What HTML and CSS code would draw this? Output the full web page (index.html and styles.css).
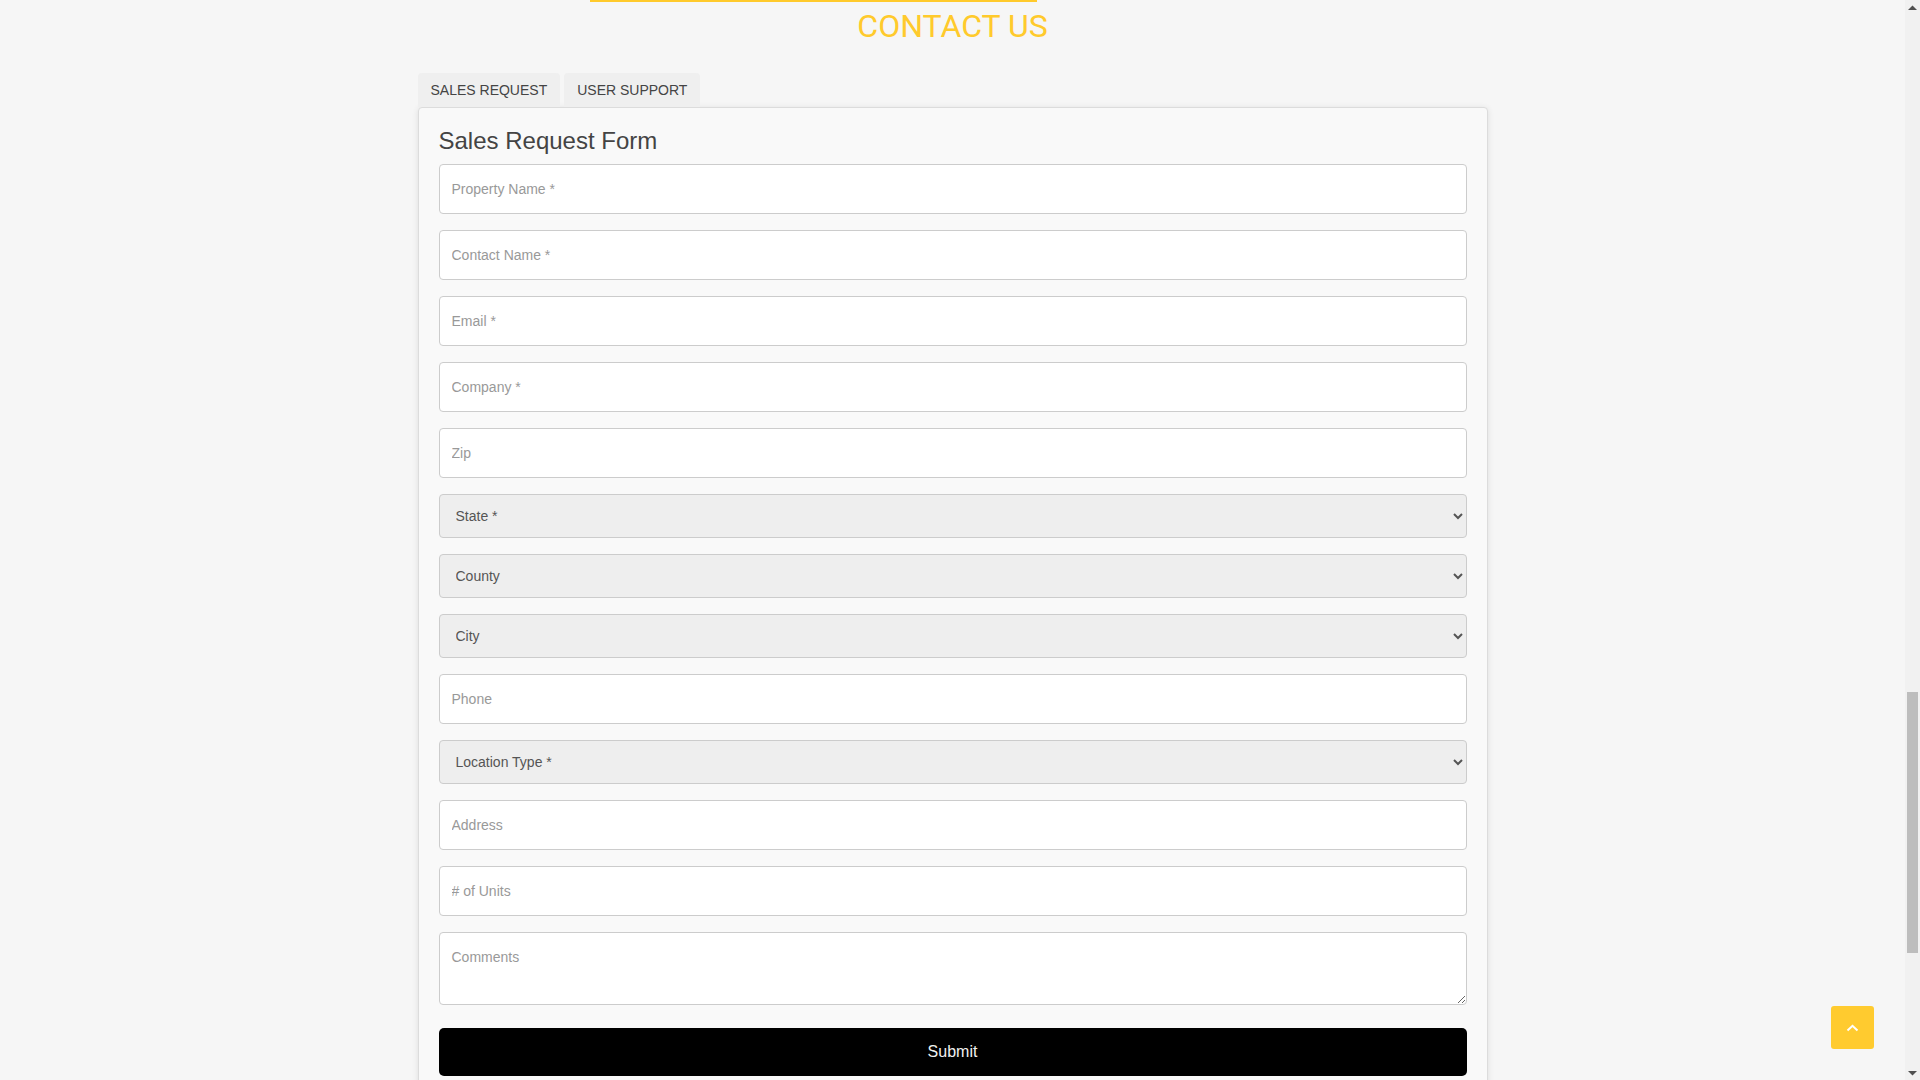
FILE: index.html
```html
<!DOCTYPE html>
<html lang="en">
<head>
<meta charset="utf-8">
<title>Contact Us</title>
<link rel="stylesheet" href="styles.css">
</head>
<body>
<div class="frame">
  <div class="page">
    <div class="topbar"></div>
    <h1 class="title">CONTACT US</h1>
    <div class="wrap">
      <div class="tabs">
        <div class="tab active">SALES REQUEST</div>
        <div class="tab">USER SUPPORT</div>
      </div>
      <div class="card">
        <h3 class="form-title">Sales Request Form</h3>
        <form class="form">
          <input class="field" type="text" placeholder="Property Name *">
          <input class="field" type="text" placeholder="Contact Name *">
          <input class="field" type="text" placeholder="Email *">
          <input class="field" type="text" placeholder="Company *">
          <input class="field" type="text" placeholder="Zip">
          <select class="choice"><option>State *</option></select>
          <select class="choice"><option>County</option></select>
          <select class="choice"><option>City</option></select>
          <input class="field" type="text" placeholder="Phone">
          <select class="choice"><option>Location Type *</option></select>
          <input class="field" type="text" placeholder="Address">
          <input class="field" type="text" placeholder="# of Units">
          <textarea class="comments" placeholder="Comments"></textarea>
          <button class="submit" type="button">Submit</button>
        </form>
      </div>
    </div>
  </div>
  <div class="scrollbar">
    <div class="sb-arrow"><svg width="9" height="6" viewBox="0 0 9 6"><path d="M0 5 L4.5 0.5 L9 5 Z" fill="#505050"/></svg></div>
    <div class="sb-track">
      <div class="sb-space"></div>
      <div class="sb-thumb"></div>
      <div class="sb-rest"></div>
    </div>
    <div class="sb-arrow"><svg width="9" height="6" viewBox="0 0 9 6"><path d="M0 1 L4.5 5.5 L9 1 Z" fill="#505050"/></svg></div>
  </div>
</div>
<a class="to-top" href="#">
  <svg width="13" height="8" viewBox="0 0 13 8"><path d="M1.5 6.5 L6.5 1.8 L11.5 6.5" fill="none" stroke="#ffffff" stroke-width="2"/></svg>
</a>
</body>
</html>
```
FILE: styles.css
```css
html, body {
  margin: 0;
  padding: 0;
  height: 1080px;
  overflow: hidden;
}
body {
  background: #f6f6f6;
  font-family: "Liberation Sans", Arial, sans-serif;
  color: #333;
}
.frame {
  display: flex;
  height: 1080px;
}
.page {
  flex: 1;
  min-width: 0;
  overflow: hidden;
}
.topbar {
  height: 2px;
  width: 447px;
  margin-left: 590px;
  background: #ffca2c;
}
.title {
  margin: 6px 0 29px;
  text-align: center;
  font-family: Roboto, "Liberation Sans", sans-serif;
  font-weight: 400;
  font-size: 32px;
  line-height: 36px;
  letter-spacing: 0;
  color: #ffca2c;
}
.wrap {
  width: 1070px;
  margin: 0 auto;
}
.tabs {
  display: flex;
  gap: 4px;
}
.tab {
  height: 34px;
  line-height: 34px;
  padding: 0 13px;
  background: #efefef;
  border-radius: 4px 4px 0 0;
  font-size: 14px;
  color: #444;
}
.card {
  background: #f9f9f9;
  border: 1px solid #dcdcdc;
  border-radius: 4px;
  padding: 20px 20px 20px;
  box-shadow: 0 1px 6px rgba(0, 0, 0, 0.10);
}
.form-title {
  margin: 0 0 10px;
  font-size: 24px;
  font-weight: 400;
  line-height: 26.4px;
  color: #444;
}
.form {
  display: flex;
  flex-direction: column;
}
.field, .choice, .comments {
  box-sizing: border-box;
  width: 100%;
  margin: 0 0 16px;
  border: 1px solid #cccccc;
  border-radius: 4px;
  font-family: "Liberation Sans", Arial, sans-serif;
  font-size: 14px;
  color: #555;
  outline: none;
}
.field {
  height: 50px;
  padding: 0 12px;
  background: #fff;
}
.choice {
  height: 44px;
  padding: 0 12px;
  background-color: #eeeeee;
}
.comments {
  height: 73px;
  padding: 14px 12px;
  background: #fff;
  line-height: 20px;
  resize: vertical;
  margin-bottom: 23px;
}
.field::placeholder, .comments::placeholder {
  color: #999;
  opacity: 1;
}
.submit {
  height: 48px;
  width: 100%;
  border: none;
  border-radius: 5px;
  background: #000;
  color: #f0f0f0;
  font-family: "Liberation Sans", Arial, sans-serif;
  font-size: 16px;
}
.scrollbar {
  width: 15px;
  background: #f1f1f1;
  display: flex;
  flex-direction: column;
}
.sb-arrow {
  height: 15px;
  display: flex;
  align-items: center;
  justify-content: center;
}
.sb-track {
  flex: 1;
  display: flex;
  flex-direction: column;
}
.sb-space {
  height: 677px;
}
.sb-thumb {
  height: 261px;
  margin: 0 2px;
  background: #bdbdbd;
}
.sb-rest {
  flex: 1;
}
.to-top {
  position: fixed;
  right: 46px;
  bottom: 31px;
  width: 43px;
  height: 43px;
  border-radius: 3px;
  background: #ffcb2f;
  display: flex;
  align-items: center;
  justify-content: center;
}
```
